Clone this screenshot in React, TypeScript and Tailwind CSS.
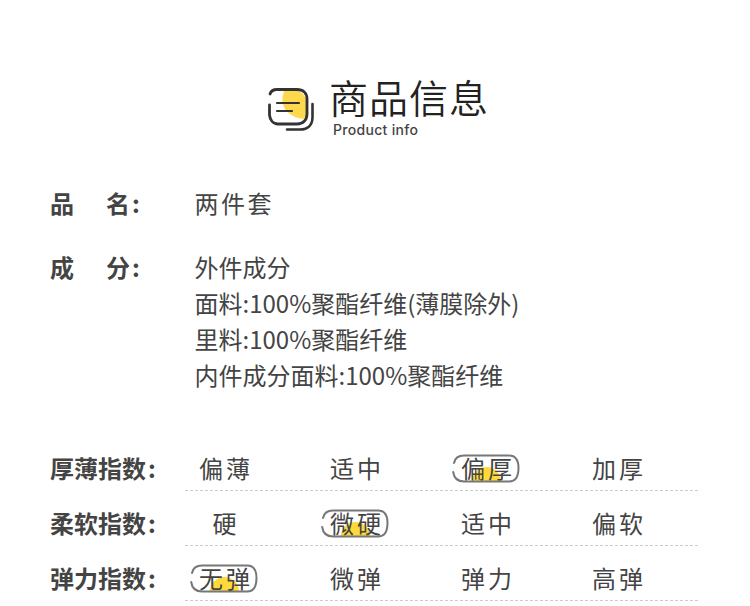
const cjk = "font-['Noto_Sans_CJK_SC','Noto_Sans_CJK_JP',sans-serif]"

function Logo() {
  return (
    <svg width="48" height="46" viewBox="0 0 48 46" className="shrink-0" fill="none">
      <path d="M18 2.5 C27 1.5 36 4 39 12 C41 20 40 28 39 32 C30 32 22 28 18 22 C14 15 15 8 18 2.5Z" fill="#FFD84D" />
      <path d="M3 7 C4 4 7 2.5 10 2.5 L30 2.5 C36 2.5 40 6 40 12 L40 27 C40 33 36 37 30 37 L11 37 C6 37 3 33 2.5 28 L2.5 18" stroke="#333" strokeWidth="2.8" strokeLinecap="round" />
      <path d="M10 16 H32 M10 24 H25" stroke="#333" strokeWidth="2.2" strokeLinecap="round" />
      <path d="M20 42.5 L33 42.5 C41 42.5 45.5 38 45.5 30 L45.5 17" stroke="#333" strokeWidth="2.6" strokeLinecap="round" />
    </svg>
  )
}

function Tag({ text, selected }: { text: string; selected?: boolean }) {
  return (
    <div className="relative flex h-[28px] w-[78px] items-center justify-center">
      {selected && (
        <>
          <span className="absolute bottom-0 left-[25px] h-[15px] w-[29px] rounded-t-full bg-[#FFD93B]" />
          <svg width="68" height="29" viewBox="0 0 68 29" fill="none" className="absolute left-[5px] top-0">
            <path d="M2 9 C3 4 6 1.5 12 1.5 L57 1.5 C63 1.5 66.5 5 66.5 14 C66.5 23 63 27.5 57 27.5 L12 27.5 C6 27.5 2 24 1.2 18" stroke="#777" strokeWidth="2" strokeLinecap="round" />
          </svg>
        </>
      )}
      <span className="relative pl-[4px] text-[24px] leading-[28px] tracking-[3px] text-[#444]">{text}</span>
    </div>
  )
}

const rows = [
  { label: '厚薄指数', items: ['偏薄', '适中', '偏厚', '加厚'], on: 2 },
  { label: '柔软指数', items: ['硬', '微硬', '适中', '偏软'], on: 1 },
  { label: '弹力指数', items: ['无弹', '微弹', '弹力', '高弹'], on: 0 },
]

export default function App() {
  return (
    <div className={`h-[606px] w-[750px] overflow-hidden bg-white ${cjk}`}>
      <div className="flex h-[137px] items-start pl-[267px] pt-[71px]">
        <div className="pt-[16px]">
          <Logo />
        </div>
        <div className="ml-[14px]">
          <div className="h-[50px] text-[39px] font-[350] leading-[50px] tracking-[1px] text-[#222]">商品信息</div>
          <div className="mt-[1px] pl-[4px] font-['Inter',sans-serif] text-[14px] font-medium leading-[16px] tracking-[0.3px] text-[#444]">
            Product info
          </div>
        </div>
      </div>

      <div className="mt-[48px] flex pl-[50px] text-[24px] leading-[36px] text-[#444]">
        <div className="flex w-[145px] font-bold">
          <span className="w-[56px]">品</span>
          <span>名<span className="ml-[2px]">:</span></span>
        </div>
        <div className="ml-[-0.5px] tracking-[2.5px]">两件套</div>
      </div>

      <div className="mt-[28px] flex pl-[50px] text-[24px] leading-[36px] text-[#444]">
        <div className="flex w-[145px] font-bold">
          <span className="w-[56px]">成</span>
          <span>分<span className="ml-[2px]">:</span></span>
        </div>
        <div className="ml-[-0.5px]">
          <div>外件成分</div>
          <div>面料:100%聚酯纤维(薄膜除外)</div>
          <div>里料:100%聚酯纤维</div>
          <div>内件成分面料:100%聚酯纤维</div>
        </div>
      </div>

      <div className="mt-[43px] pl-[50px]">
        {rows.map((r) => (
          <div key={r.label} className="flex h-[55px] items-start">
            <div className="w-[135px] pt-[14px] text-[24px] font-bold leading-[36px] text-[#444]">
              {r.label}
              <span className="ml-[2px]">:</span>
            </div>
            <div className="flex h-[55px] w-[513px] items-start gap-[53px] border-b border-dashed border-[#ccc] pt-[18px]">
              {r.items.map((t, i) => (
                <Tag key={t} text={t} selected={i === r.on} />
              ))}
            </div>
          </div>
        ))}
      </div>
    </div>
  )
}
